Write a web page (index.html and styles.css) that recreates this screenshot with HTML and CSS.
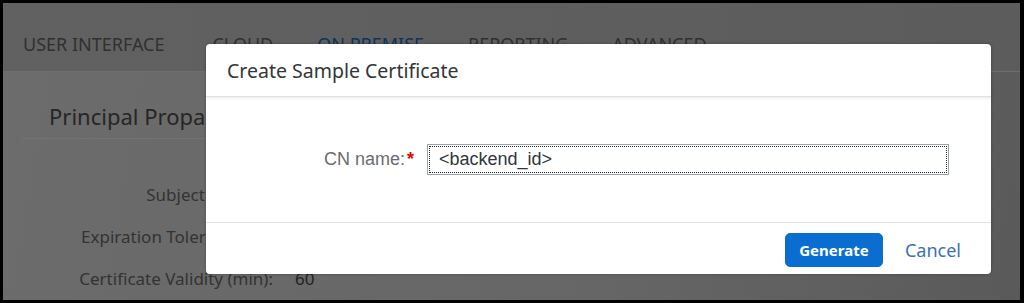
FILE: index.html
```html
<!DOCTYPE html>
<html>
<head>
<meta charset="utf-8">
<link rel="stylesheet" href="styles.css">
</head>
<body>
<div class="frame">
  <div class="page">
    <nav class="tabs">
      <span class="tab first">USER INTERFACE</span>
      <span class="tab">CLOUD</span>
      <span class="tab active">ON PREMISE</span>
      <span class="tab">REPORTING</span>
      <span class="tab">ADVANCED</span>
    </nav>
    <div class="content">
      <h2 class="section-title">Principal Propagation</h2>
      <div class="rows">
        <div class="row"><span class="lbl">Subject Pattern:</span><span class="val"></span></div>
        <div class="row"><span class="lbl">Expiration Tolerance (h):</span><span class="val"></span></div>
        <div class="row"><span class="lbl">Certificate Validity (min):</span><span class="val">60</span></div>
      </div>
    </div>
  </div>
  <div class="dialog">
    <div class="dlg-header">Create Sample Certificate</div>
    <div class="dlg-body">
      <label class="field-label">CN name:<span class="req">*</span></label>
      <div class="input">&lt;backend_id&gt;</div>
    </div>
    <div class="dlg-footer">
      <button class="btn-primary">Generate</button>
      <button class="btn-link">Cancel</button>
    </div>
  </div>
</div>
</body>
</html>
```

FILE: styles.css
```css
html, body {
  margin: 0;
  padding: 0;
  background: #000;
}
body {
  width: 1024px;
  height: 303px;
  overflow: hidden;
  font-family: "Liberation Sans", Arial, sans-serif;
}
.frame {
  position: relative;
  margin: 3px 0 0 3px;
  width: 1017px;
  height: 297px;
  overflow: hidden;
  background: linear-gradient(100deg, #6c6c6c 0%, #666 60%, #5a5a5a 100%);
}
.page {
  display: flex;
  flex-direction: column;
  height: 100%;
}
.tabs {
  box-sizing: border-box;
  height: 69px;
  padding-top: 14px;
  border-bottom: 1px solid #6e6e6e;
  background: linear-gradient(90deg, #616161, #5c5c5c);
  display: flex;
  align-items: center;
  padding-left: 20px;
  gap: 44px;
}
.tab {
  font-family: "Noto Sans", "Open Sans", sans-serif;
  font-size: 18px;
  color: #303030;
}
.tab.first {
  margin-right: 4px;
}
.tab.active {
  color: #10325c;
}
.content {
  padding: 29px 0 0 19px;
}
.section-title {
  margin: 0;
  width: 580px;
  padding: 0 0 7px 27px;
  font-family: "Noto Sans", "Open Sans", sans-serif;
  font-weight: normal;
  font-size: 22px;
  line-height: 30px;
  color: #262626;
  border-bottom: 1px solid #737373;
}
.rows {
  display: flex;
  flex-direction: column;
  gap: 22px;
  padding-top: 45px;
}
.row {
  display: flex;
  align-items: center;
  height: 20px;
}
.lbl {
  width: 251px;
  text-align: right;
  font-family: "Noto Sans", "Open Sans", sans-serif;
  font-size: 17px;
  color: #333;
}
.val {
  margin-left: 22px;
  font-family: "Noto Sans", "Open Sans", sans-serif;
  font-size: 17px;
  color: #222;
}
.dialog {
  position: absolute;
  left: 203px;
  top: 41px;
  width: 785px;
  height: 230px;
  background: #fff;
  border-radius: 4px;
  display: flex;
  flex-direction: column;
  box-shadow: 0 0 3px rgba(0,0,0,0.3);
}
.dlg-header {
  height: 52px;
  display: flex;
  align-items: center;
  padding-left: 21px;
  font-family: "Noto Sans", "Open Sans", sans-serif;
  font-size: 19.5px;
  color: #32363a;
  border-bottom: 1px solid #e0e0e0;
  box-shadow: 0 2px 2px rgba(0,0,0,0.06);
}
.dlg-body {
  height: 125px;
  display: flex;
  align-items: center;
  border-bottom: 1px solid #e2e2e2;
}
.field-label {
  width: 208px;
  text-align: right;
  font-size: 18px;
  color: #6a6d70;
  margin-right: 13px;
}
.req {
  color: #e00;
  margin-left: 2px;
  font-weight: bold;
}
.input {
  box-sizing: border-box;
  width: 522px;
  height: 31px;
  border: 1px solid #9aa4ad;
  outline: 1px dotted #222;
  outline-offset: -3px;
  display: flex;
  align-items: center;
  padding-left: 11px;
  font-size: 18px;
  color: #32363a;
}
.dlg-footer {
  flex: 1;
  display: flex;
  align-items: center;
  justify-content: flex-end;
  padding-right: 30px;
  gap: 22px;
}
.btn-primary {
  width: 98px;
  height: 34px;
  background: #0a6ed1;
  color: #fff;
  border: 1px solid #0a6ed1;
  border-radius: 5px;
  font-family: "Noto Sans", "Open Sans", sans-serif;
  font-weight: bold;
  font-size: 15px;
  margin-top: 2px;
}
.btn-link {
  background: none;
  border: none;
  padding: 0;
  color: #3a72b8;
  font-family: "Noto Sans", "Open Sans", sans-serif;
  font-size: 18px;
  margin-top: 2px;
}
```
